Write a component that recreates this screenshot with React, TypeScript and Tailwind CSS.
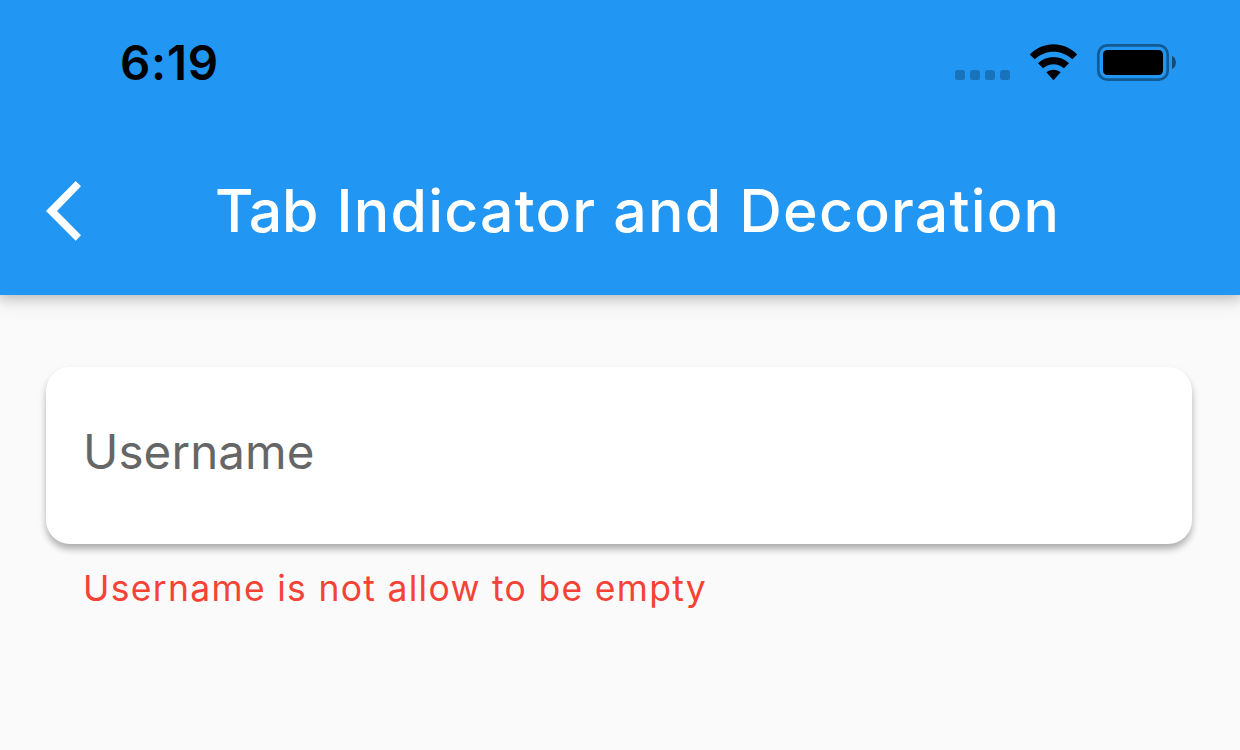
function StatusIcons() {
  return (
    <svg width="226" height="42" viewBox="950 40 226 42" aria-hidden="true">
      <g fill="#000" fillOpacity="0.23">
        <rect x="955" y="70" width="10" height="10" rx="2.8" />
        <rect x="970" y="70" width="10" height="10" rx="2.8" />
        <rect x="985" y="70" width="10" height="10" rx="2.8" />
        <rect x="1000" y="70" width="10" height="10" rx="2.8" />
      </g>
      <path d="M1029.8 54.6C1043.2 40.9 1063.8 40.9 1077.2 54.6L1072.3 59.3C1061.5 49.2 1045.5 49.2 1034.7 59.3Z" />
      <path d="M1038 63.3C1046.7 54.9 1060.3 54.9 1069 63.3L1063.9 68.3C1057.7 62.8 1049.3 62.8 1043.1 68.3Z" />
      <path d="M1046.4 72.3C1050.3 68.9 1056.7 68.9 1060.6 72.3L1053.5 80.2Z" />
      <rect x="1098.3" y="45.3" width="69.4" height="34.4" rx="9" fill="none" stroke="#000" strokeOpacity="0.4" strokeWidth="2.7" />
      <rect x="1103" y="50" width="60" height="25" rx="4.5" />
      <path d="M1172 56C1177.2 58 1177.2 67 1172 69Z" fillOpacity="0.5" />
    </svg>
  );
}

export default function App() {
  return (
    <div className="flex h-[750px] w-[1240px] flex-col overflow-hidden bg-[#fafafa] font-['Inter',sans-serif]">
      <header className="h-[295px] shrink-0 bg-[#2196f3] shadow-[0_1px_12px_2px_rgba(0,0,0,0.2),0_3px_22px_2px_rgba(0,0,0,0.1)]">
        <div className="flex h-[127px] items-start justify-between pl-[120px] pr-16">
          <time className="pt-[39px] text-[47.5px] leading-none font-semibold tracking-[0.7px] text-black">6:19</time>
          <div className="pt-10">
            <StatusIcons />
          </div>
        </div>
        <div className="flex h-[168px] items-start">
          <button aria-label="Back" className="ml-[45px] mt-[54px]">
            <svg width="37" height="60" viewBox="45 181 37 60" fill="#fff">
              <path d="M75.7 181L81 186.3L57 211L81 235.3L75.7 240.8L46 211Z" />
            </svg>
          </button>
          <h1 className="ml-[133px] mt-[54px] text-[59px] leading-none font-medium tracking-[1.2px] whitespace-nowrap text-white">
            <span className="tracking-[-4.9px]">T</span><span className="tracking-[-0.2px]">a</span>b Indicator and Decoration
          </h1>
        </div>
      </header>
      <main className="px-[46px] pt-[72px]">
        <div className="flex h-[177px] w-[1146px] items-start rounded-[24px] bg-white px-[37px] pt-[60px] shadow-[0_6px_8px_-2px_rgba(0,0,0,0.2),0_5px_7px_0_rgba(0,0,0,0.14),0_3px_12px_0_rgba(0,0,0,0.04)]">
          <input
            aria-label="Username"
            placeholder="Username"
            className="h-12 w-full bg-transparent text-[47.5px] leading-none tracking-[0.1px] outline-none placeholder:text-[#666]"
          />
        </div>
        <p className="ml-[37px] mt-[27px] text-[35.5px] leading-none tracking-[1.3px] text-[#f44336]">
          Username is not allow to be empty
        </p>
      </main>
    </div>
  );
}
